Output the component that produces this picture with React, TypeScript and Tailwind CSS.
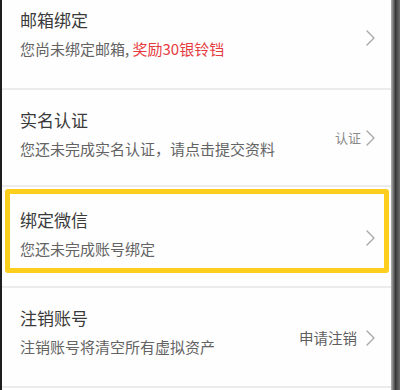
import React from "react";

const Chevron = () => (
  <svg width="9" height="16" viewBox="0 0 9 16" fill="none" className="shrink-0">
    <polyline points="1,1 8,8 1,15" stroke="#a6a6a6" strokeWidth="1.3" strokeLinecap="round" strokeLinejoin="round" />
  </svg>
);

const Sep = () => <div className="h-[2px] bg-[#ececec]" />;

export default function App() {
  return (
    <div
      className="flex w-[400px] h-[390px] overflow-hidden bg-white"
      style={{ fontFamily: '"Noto Sans CJK SC", "Noto Sans", sans-serif' }}
    >
      <div className="w-[2px] shrink-0 bg-[#1e1e1e]" />
      <div className="flex-1 flex flex-col bg-[#fefefe]">
        {/* Row 1 */}
        <div className="h-[88px] flex items-start justify-between pt-[10px] pl-[18px] pr-[16px]">
          <div className="flex flex-col">
            <div className="text-[17px] leading-[20px] text-[#3a3a3a]">邮箱绑定</div>
            <div className="mt-[9px] text-[15px] leading-[20px] text-[#636363] whitespace-pre">
              您尚未绑定邮箱, <span className="text-[#e63b3e]">奖励30银铃铛</span>
            </div>
          </div>
          <div className="mt-[18px] h-[20px] flex items-center">
            <Chevron />
          </div>
        </div>
        <Sep />
        {/* Row 2 */}
        <div className="h-[95px] flex items-start justify-between pt-[20px] pl-[18px] pr-[16px]">
          <div className="flex flex-col">
            <div className="text-[17px] leading-[20px] text-[#3a3a3a]">实名认证</div>
            <div className="mt-[9px] text-[15px] leading-[20px] text-[#636363]">您还未完成实名认证，请点击提交资料</div>
          </div>
          <div className="mt-[18px] h-[20px] flex items-center gap-[5px]">
            <span className="text-[13px] leading-[20px] text-[#8a8a8a]">认证</span>
            <Chevron />
          </div>
        </div>
        <Sep />
        {/* Row 3 highlighted */}
        <div className="h-[99px] flex flex-col pt-[2px] pl-[3px] pr-[2px]">
          <div className="h-[84px] border-[5px] border-[#fccf1f] rounded-[3px] flex items-start justify-between pt-[16px] pl-[10px] pr-[9px]">
            <div className="flex flex-col">
              <div className="text-[17px] leading-[20px] text-[#3a3a3a]">绑定微信</div>
              <div className="mt-[9px] text-[15px] leading-[20px] text-[#636363]">您还未完成账号绑定</div>
            </div>
            <div className="mt-[18px] h-[20px] flex items-center">
              <Chevron />
            </div>
          </div>
        </div>
        <Sep />
        {/* Row 4 */}
        <div className="h-[98px] flex items-start justify-between pt-[20px] pl-[18px] pr-[16px]">
          <div className="flex flex-col">
            <div className="text-[17px] leading-[20px] text-[#3a3a3a]">注销账号</div>
            <div className="mt-[9px] text-[15px] leading-[20px] text-[#636363]">注销账号将清空所有虚拟资产</div>
          </div>
          <div className="mt-[20px] h-[20px] flex items-center gap-[9px]">
            <span className="text-[14.5px] leading-[20px] text-[#5e5e5e]">申请注销</span>
            <Chevron />
          </div>
        </div>
        <Sep />
      </div>
      <div className="w-[9px] shrink-0 bg-gradient-to-r from-[#b5b5b5] via-[#3a3a3a] to-[#6e6e6e]" />
    </div>
  );
}
